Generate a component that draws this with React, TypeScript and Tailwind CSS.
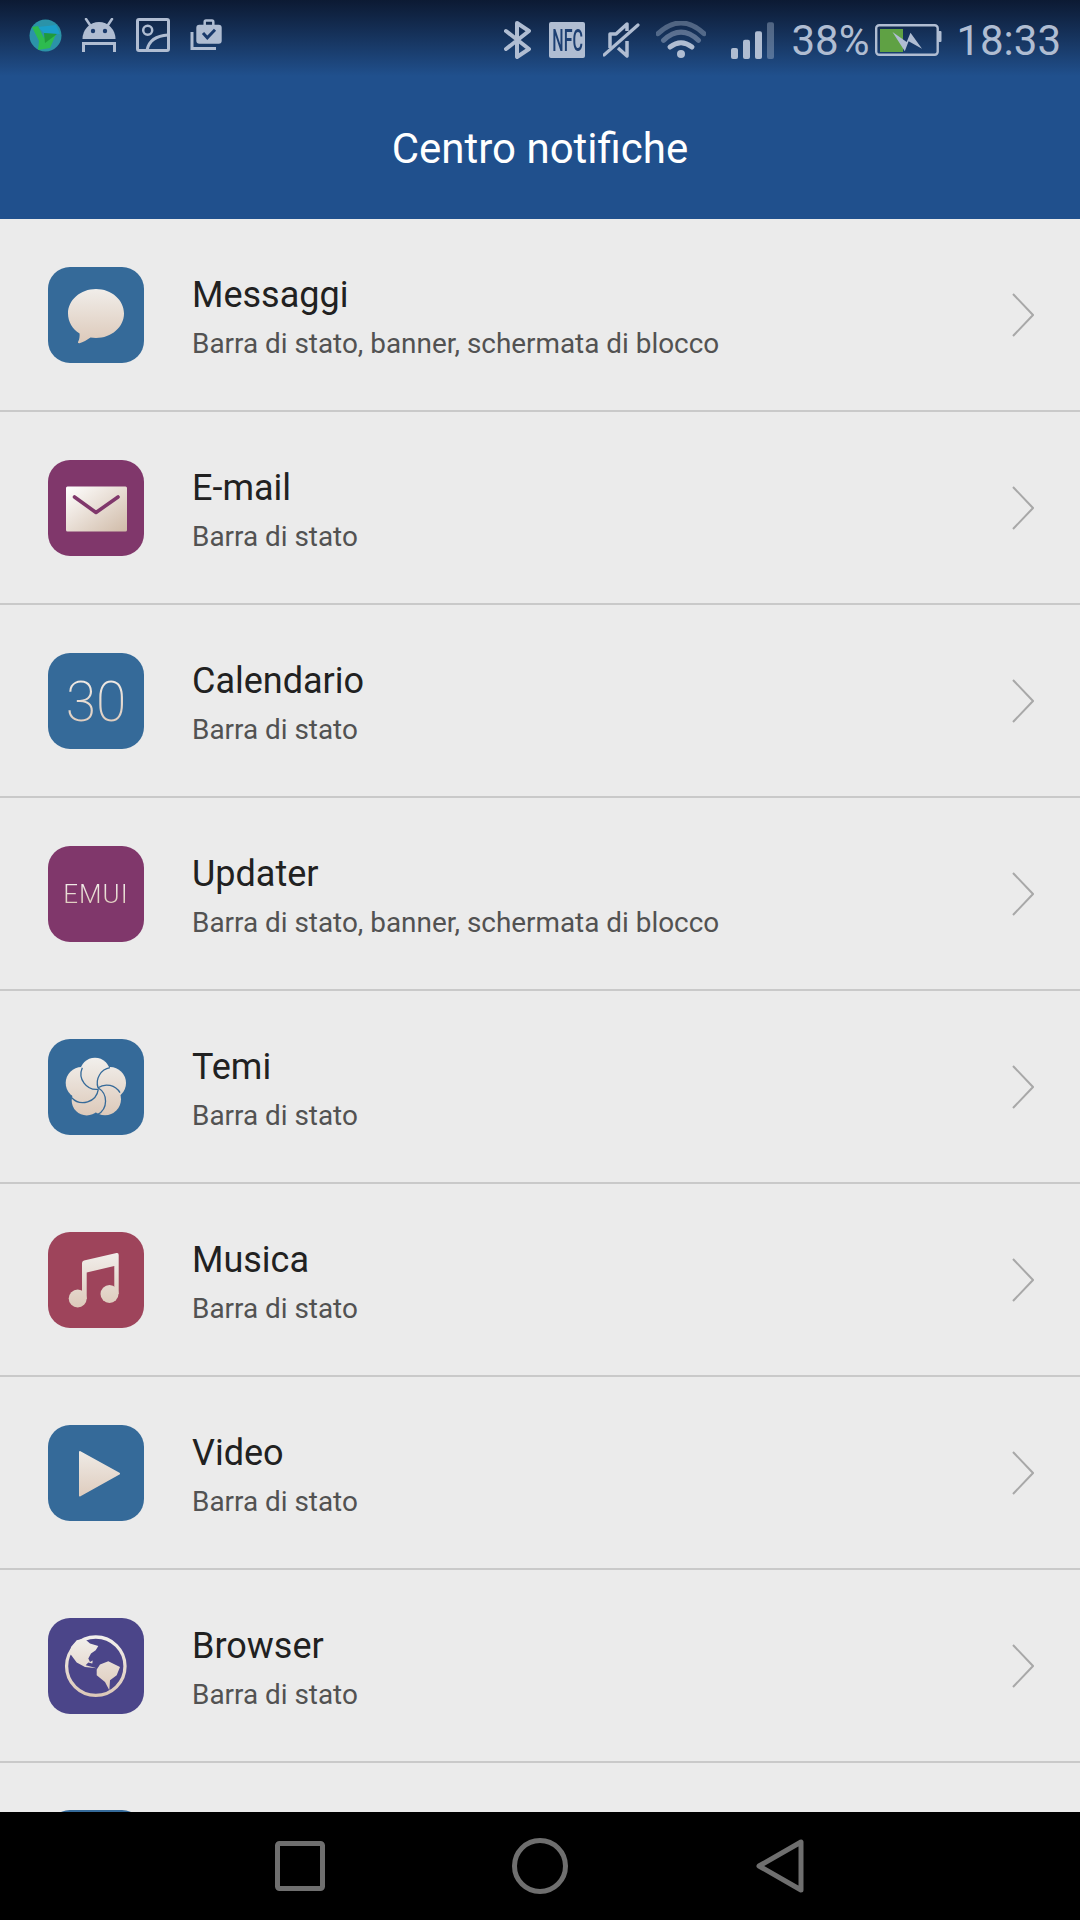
import type { ReactNode } from "react";

const STATUS = "#b0bdd2";

/* Shared cream fill used by all the app icons */
function Cream({ id }: { id: string }) {
  return (
    <defs>
      <linearGradient id={id} gradientUnits="userSpaceOnUse" x1="0" y1="18" x2="0" y2="78">
        <stop offset="0" stopColor="#f2f0ed" />
        <stop offset="1" stopColor="#dcc8b8" />
      </linearGradient>
    </defs>
  );
}

function Art({ id, children }: { id: string; children: ReactNode }) {
  return (
    <svg viewBox="0 0 96 96" className="h-[96px] w-[96px]">
      <Cream id={id} />
      {children}
    </svg>
  );
}

function BubbleArt() {
  return (
    <Art id="c-bubble">
      <path
        fill="url(#c-bubble)"
        d="M48 22C63.5 22 76 33 76 46.5C76 60 63.5 71 48 71C46 71 44 70.8 42.5 70.6C39 73 35 75.6 31.5 76.3C30 76.5 29.6 75.6 30.2 74.6C31.3 72.6 31.8 69.6 31.6 66.5C24.5 62 20 54.8 20 46.5C20 33 32.5 22 48 22Z"
      />
    </Art>
  );
}

function MailArt() {
  return (
    <svg viewBox="0 0 96 96" className="h-[96px] w-[96px]">
      <defs>
        <linearGradient id="c-mail" x1="0" y1="0" x2="1" y2="1">
          <stop offset="0" stopColor="#ffffff" />
          <stop offset="1" stopColor="#d0bba8" />
        </linearGradient>
      </defs>
      <rect x="18" y="26.5" width="61" height="45" rx="1.5" fill="url(#c-mail)" />
      <path d="M26.5 37L48 52.5L70 37" fill="none" stroke="#80376b" strokeWidth="3.6" strokeLinecap="round" strokeLinejoin="round" />
    </svg>
  );
}

function FlowerArt() {
  return (
    <Art id="c-flower">
      <g fill="url(#c-flower)">
        <circle cx="47" cy="33.7" r="15" />
        <circle cx="33.7" cy="44" r="16" />
        <circle cx="62" cy="44" r="16" />
        <circle cx="38.7" cy="61.5" r="15" />
        <circle cx="57" cy="60.3" r="16" />
        <circle cx="48" cy="48" r="12" />
      </g>
      <g fill="none" stroke="#356a99" strokeWidth="1.3">
        <path d="M34.3 28.7A15.5 15.5 0 0 0 50.3 50.3" />
        <path d="M23.7 58.7A15.5 15.5 0 0 0 50.3 50.3" />
        <path d="M50 48.7A15.5 15.5 0 0 1 49.7 75.5" />
        <path d="M50 48.7A15.5 15.5 0 0 1 72 53.7" />
        <path d="M50 48.7A15.5 15.5 0 0 1 62 28.7" />
      </g>
    </Art>
  );
}

function MusicArt() {
  return (
    <Art id="c-music">
      <g fill="url(#c-music)">
        <circle cx="29.7" cy="66.5" r="9" />
        <circle cx="61.5" cy="62" r="9" />
        <path d="M34 31Q34 29 36 28.5L68.5 21Q70.7 20.5 70.7 23V62H66.3V34L38.7 40.5V67H34Z" />
      </g>
    </Art>
  );
}

function PlayArt() {
  return (
    <Art id="c-play">
      <path d="M32 27L71 48.7L32 70.5Z" fill="url(#c-play)" stroke="url(#c-play)" strokeWidth="2" strokeLinejoin="round" />
    </Art>
  );
}

function GlobeArt() {
  return (
    <Art id="c-globe">
      <circle cx="47.8" cy="48.2" r="29.2" fill="none" stroke="url(#c-globe)" strokeWidth="3.3" />
      <path
        fill="url(#c-globe)"
        d="M36.3 20.6L42 25.6L50.3 28L47.7 32.3L43 35.6L40.3 40.6L42 44L44.7 42.6L44.3 45.6L40.3 44.6L37.7 47.3L48.7 50.3L37 49L28.7 44.6L22 35.6L23 29L28.7 22.3Z"
      />
      <path
        fill="url(#c-globe)"
        d="M48.7 51.6L52 46.6L60.3 43.3L72 49L68.7 57.3L62 62.3L61.3 72.3L57 64L48.7 57.3Z"
      />
    </Art>
  );
}

function Chevron() {
  return (
    <svg viewBox="0 0 22 44" className="h-[44px] w-[22px] shrink-0">
      <path d="M1 1L21 22L1 43" fill="none" stroke="#a8a8a8" strokeWidth="2" />
    </svg>
  );
}

type Row = { title: string; sub: string; color: string; art: ReactNode };

const FULL = "Barra di stato, banner, schermata di blocco";
const BAR = "Barra di stato";

const ROWS: Row[] = [
  { title: "Messaggi", sub: FULL, color: "bg-[#356a99]", art: <BubbleArt /> },
  { title: "E-mail", sub: BAR, color: "bg-[#80376b]", art: <MailArt /> },
  {
    title: "Calendario",
    sub: BAR,
    color: "bg-[#356a99]",
    art: (
      <span className="bg-gradient-to-b from-[#f2f0ed] to-[#dcc8b8] bg-clip-text pt-[4px] text-[55px] leading-[55px] font-extralight text-transparent">
        30
      </span>
    ),
  },
  {
    title: "Updater",
    sub: FULL,
    color: "bg-[#80376b]",
    art: (
      <span className="bg-gradient-to-b from-[#f2f0ed] to-[#dcc8b8] bg-clip-text text-[26px] leading-[26px] font-light tracking-[1px] text-transparent">
        EMUI
      </span>
    ),
  },
  { title: "Temi", sub: BAR, color: "bg-[#356a99]", art: <FlowerArt /> },
  { title: "Musica", sub: BAR, color: "bg-[#9e445b]", art: <MusicArt /> },
  { title: "Video", sub: BAR, color: "bg-[#356a99]", art: <PlayArt /> },
  { title: "Browser", sub: BAR, color: "bg-[#4b4589]", art: <GlobeArt /> },
];

function NotificationRow({ row }: { row: Row }) {
  return (
    <div className="flex h-[193px] shrink-0 items-center border-b-2 border-[#c9c9c9] pr-[46px] pl-[48px]">
      <div className={`flex h-[96px] w-[96px] shrink-0 items-center justify-center rounded-[22px] ${row.color}`}>
        {row.art}
      </div>
      <div className="ml-[48px] flex-1 pt-[5px]">
        <div className="text-[36px] leading-[44px] text-[#212121]">{row.title}</div>
        <div className="mt-[9px] text-[27.9px] leading-[36px] text-[#525252]">{row.sub}</div>
      </div>
      <Chevron />
    </div>
  );
}

function StatusLeft() {
  return (
    <div className="flex items-center gap-[20px]">
      <svg viewBox="0 0 33 33" className="h-[33px] w-[33px]">
        <circle cx="16.5" cy="16.5" r="16" fill="#2b93a8" />
        <path d="M9 8L27 6L31 15L15 14Z" fill="#1b9fc9" />
        <path d="M3 8L9 7L15 19L27 15L21 29L9 31L10 22Z" fill="#2dbb4f" />
        <path d="M15 14L28 15L16 24Z" fill="#1f9a3c" />
      </svg>
      <svg viewBox="0 0 34 34" className="h-[34px] w-[34px]">
        <path d="M0.5 21A16.5 17 0 0 1 33.5 21Z" fill={STATUS} />
        <circle cx="11" cy="13" r="2.2" fill="#1a3a6c" />
        <circle cx="23" cy="13" r="2.2" fill="#1a3a6c" />
        <path d="M4 1L8 7M30 1L26 7" stroke={STATUS} strokeWidth="2.5" strokeLinecap="round" />
        <path d="M1.5 34V25.5H32.5V34" fill="none" stroke={STATUS} strokeWidth="3" />
      </svg>
      <svg viewBox="0 0 34 34" className="h-[34px] w-[34px]">
        <rect x="1.5" y="1.5" width="31" height="31" rx="1.5" fill="none" stroke={STATUS} strokeWidth="3" />
        <circle cx="11.7" cy="12.3" r="4.5" fill="none" stroke={STATUS} strokeWidth="2.5" />
        <path d="M11 32Q14 18 32 17" fill="none" stroke={STATUS} strokeWidth="3" />
      </svg>
      <svg viewBox="0 0 32 32" className="h-[32px] w-[32px]">
        <rect x="6.3" y="5.7" width="25.4" height="19" rx="3" fill={STATUS} />
        <path d="M14.7 6V3Q14.7 1.5 16 1.5H22Q23.3 1.5 23.3 3V6" fill="none" stroke={STATUS} strokeWidth="2.5" />
        <path d="M13 14L17.3 18.7L25 10.7" fill="none" stroke="#1a3a6c" strokeWidth="3" />
        <path d="M2 13V29.5H26" fill="none" stroke={STATUS} strokeWidth="3" />
      </svg>
    </div>
  );
}

function StatusRight() {
  return (
    <div className="flex items-center text-[42px] leading-[42px] text-[#b0bdd2]">
      <svg viewBox="0 0 28 38" className="h-[38px] w-[28px]">
        <path d="M2 10L25 28L13 36V2L25 10L2 28" fill="none" stroke={STATUS} strokeWidth="4" strokeLinecap="round" strokeLinejoin="round" />
      </svg>
      <div className="ml-[17px] flex h-[36px] w-[36px] items-center justify-center rounded-[2px] bg-[#b0bdd2]">
        <span className="scale-x-[0.5] text-[32px] leading-[32px] font-medium whitespace-nowrap text-[#1d3f72]">NFC</span>
      </div>
      <svg viewBox="0 0 37 38" className="ml-[18px] h-[38px] w-[37px]">
        <path d="M7 27V13H13L24 3V10M15 27L24 35V20" fill="none" stroke={STATUS} strokeWidth="3.5" strokeLinejoin="round" />
        <path d="M1 34L35 4" stroke={STATUS} strokeWidth="3.2" strokeLinecap="round" />
      </svg>
      <svg viewBox="0 0 50 38" className="ml-[16px] h-[38px] w-[50px]">
        <path d="M2 12.7Q25 -8.7 48 12.7" fill="none" stroke={STATUS} strokeOpacity="0.4" strokeWidth="5" strokeLinecap="round" />
        <path d="M7.5 19.3Q25 3 42.5 19.3" fill="none" stroke={STATUS} strokeOpacity="0.45" strokeWidth="5" strokeLinecap="round" />
        <path d="M14 26Q25 17.5 36 26" fill="none" stroke={STATUS} strokeWidth="5" strokeLinecap="round" />
        <circle cx="25" cy="33" r="4" fill={STATUS} />
      </svg>
      <svg viewBox="0 0 44 38" className="ml-[24px] h-[38px] w-[44px]">
        <rect x="1" y="27" width="7" height="11" rx="2" fill={STATUS} />
        <rect x="13" y="18.7" width="7" height="19.3" rx="2" fill={STATUS} />
        <rect x="25" y="10.3" width="7" height="27.7" rx="2" fill={STATUS} />
        <rect x="37" y="1.3" width="7" height="36.7" rx="2" fill={STATUS} fillOpacity="0.4" />
      </svg>
      <span className="ml-[17px] pt-[2px]">38%</span>
      <svg viewBox="0 0 67 32" className="ml-[6px] h-[32px] w-[67px]">
        <rect x="1.2" y="1.2" width="61.5" height="29.6" rx="3" fill="none" stroke={STATUS} strokeWidth="2.4" />
        <rect x="63" y="7" width="3.5" height="11" rx="1" fill={STATUS} />
        <rect x="5" y="5" width="23" height="23" fill="#5fa144" />
        <path d="M17.5 8L31.7 18L35.5 8.7L47 24.7L33.6 17.3L29.8 27.3Z" fill={STATUS} />
      </svg>
      <span className="ml-[14px] pt-[2px]">18:33</span>
    </div>
  );
}

export default function App() {
  return (
    <div className="flex h-[1920px] w-[1080px] flex-col overflow-hidden bg-[#ebebeb] font-['Roboto',sans-serif]">
      <header className="flex h-[219px] shrink-0 flex-col bg-[#20508d]">
        <div className="flex h-[76px] items-start justify-between bg-gradient-to-b from-[#0c1a33] to-[#20508d] pt-[18px] pr-[19px] pl-[29px]">
          <StatusLeft />
          <StatusRight />
        </div>
        <div className="flex flex-1 items-center justify-center pt-[2px] text-[42px] text-white">Centro notifiche</div>
      </header>

      <div className="min-h-0 flex-1 overflow-hidden">
        {ROWS.map((row) => (
          <NotificationRow key={row.title} row={row} />
        ))}
        <div className="pt-[47px] pl-[48px]">
          <div className="h-[96px] w-[96px] rounded-[22px] bg-[#356a99]" />
        </div>
      </div>

      <nav className="flex h-[108px] shrink-0 items-center bg-black">
        <div className="flex w-full items-center justify-center pr-[2px]">
          <svg viewBox="0 0 50 50" className="h-[50px] w-[50px]">
            <rect x="2.5" y="2.5" width="45" height="45" rx="2" fill="none" stroke="#6f6f6f" strokeWidth="5" />
          </svg>
          <svg viewBox="0 0 56 56" className="ml-[187px] h-[56px] w-[56px]">
            <circle cx="28" cy="28" r="25.5" fill="none" stroke="#6f6f6f" strokeWidth="5" />
          </svg>
          <svg viewBox="0 0 48 54" className="ml-[188px] h-[54px] w-[48px]">
            <path d="M45 3V51L3 27Z" fill="none" stroke="#6f6f6f" strokeWidth="5" strokeLinejoin="round" />
          </svg>
        </div>
      </nav>
    </div>
  );
}
